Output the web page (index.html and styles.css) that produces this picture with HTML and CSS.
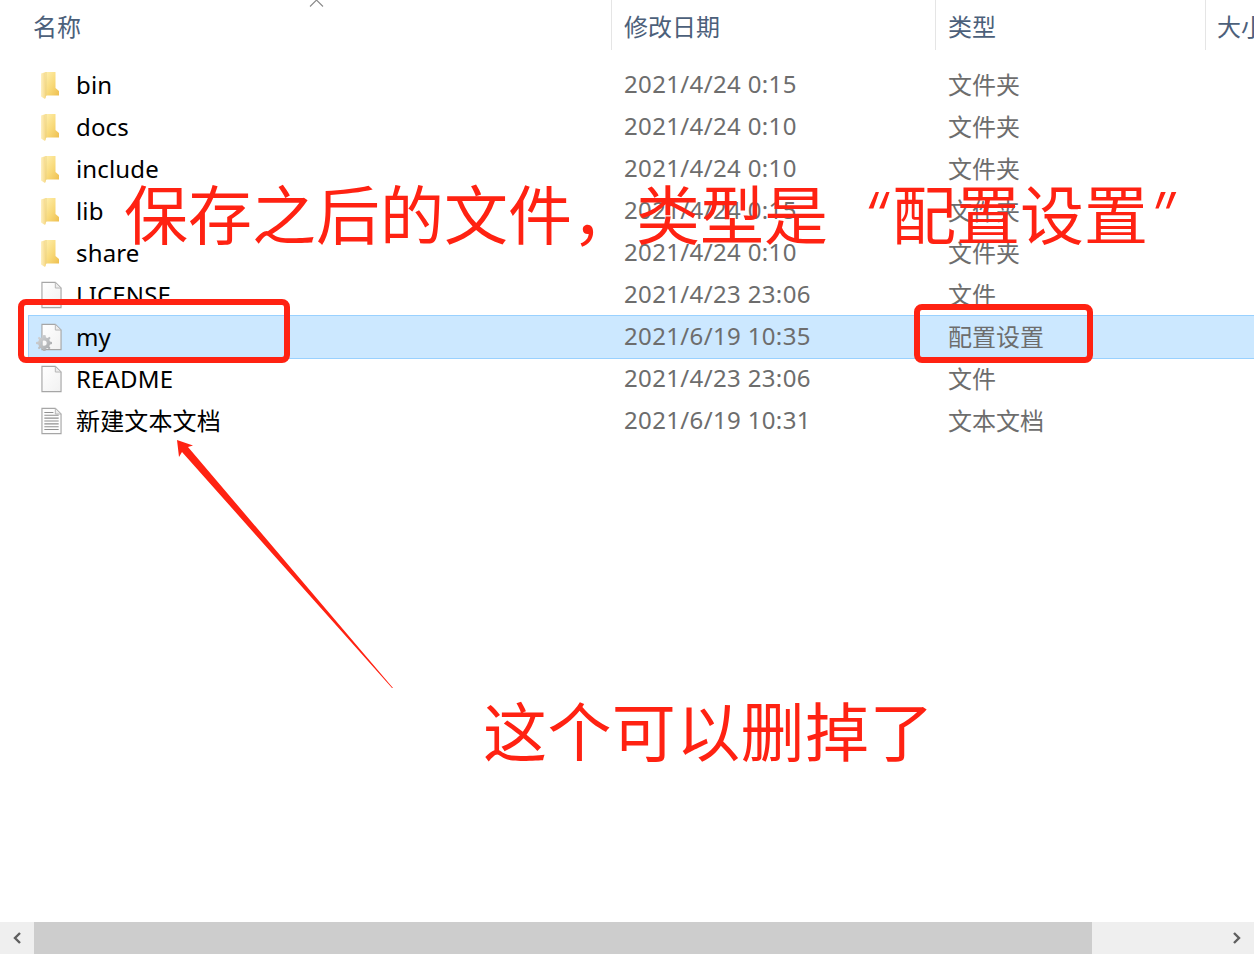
FILE: index.html
```html
<!DOCTYPE html>
<html lang="zh">
<head>
<meta charset="utf-8">
<title>文件列表</title>
<link rel="stylesheet" href="styles.css">
</head>
<body>
<svg class="defs" width="0" height="0" aria-hidden="true">
  <defs>
    <linearGradient id="fold" x1="0" y1="0" x2="1" y2="1">
      <stop offset="0" stop-color="#fff0b0"/>
      <stop offset="0.55" stop-color="#f8d978"/>
      <stop offset="1" stop-color="#eebf50"/>
    </linearGradient>
    <linearGradient id="foldback" x1="0" y1="0" x2="1" y2="0">
      <stop offset="0" stop-color="#fdf0c0"/>
      <stop offset="1" stop-color="#f6d680"/>
    </linearGradient>
    <linearGradient id="page" x1="0" y1="0" x2="1" y2="1">
      <stop offset="0" stop-color="#ffffff"/>
      <stop offset="1" stop-color="#f1f1f1"/>
    </linearGradient>
    <linearGradient id="gearfill" x1="0" y1="0" x2="1" y2="1">
      <stop offset="0" stop-color="#d6d8da"/>
      <stop offset="1" stop-color="#a4a6a8"/>
    </linearGradient>
    <symbol id="i-folder" viewBox="0 0 18 27">
      <path d="M0 1.5 L5 0 L5 25 L4 27 L0 24.5 Z" fill="url(#foldback)"/>
      <path d="M4 0 H14.5 V16 L18 19 V23.5 H4.5 Z" fill="url(#fold)"/>
      <path d="M5 0 V24" stroke="#e9cf86" stroke-width="0.8" fill="none"/>
    </symbol>
    <symbol id="i-file" viewBox="0 0 22 28">
      <path d="M1 .7 H15 L21 6.7 V27.3 H1 Z" fill="url(#page)" stroke="#a6a6a6" stroke-width="1.2"/>
      <path d="M15 .7 V6.7 H21 Z" fill="#ececec" stroke="#b5b5b5" stroke-width="1"/>
    </symbol>
    <symbol id="i-text" viewBox="0 0 22 28">
      <path d="M1 .7 H15 L21 6.7 V27.3 H1 Z" fill="#fdfdfd" stroke="#a6a6a6" stroke-width="1.2"/>
      <path d="M15 .7 V6.7 H21 Z" fill="#ececec" stroke="#b5b5b5" stroke-width="1"/>
      <path d="M3.5 5 H13 M3.5 8 H18.5 M3.5 11 H18.5 M3.5 14 H18.5 M3.5 17 H18.5 M3.5 20 H18.5 M3.5 23 H18.5" stroke="#909090" stroke-width="1.1" fill="none"/>
    </symbol>
  </defs>
</svg>

<main class="window">
  <header class="head">
    <div class="col col-name head-cell">名称
      <svg class="sort" width="15" height="8" viewBox="0 0 15 8"><path d="M1 7.5 L7.5 1 L14 7.5" fill="none" stroke="#8a8a8a" stroke-width="1.1"/></svg>
    </div>
    <div class="col col-date head-cell">修改日期</div>
    <div class="col col-type head-cell">类型</div>
    <div class="col col-size head-cell">大小</div>
  </header>

  <section class="list">
    <div class="row"><div class="col col-name"><svg class="icon-folder"><use href="#i-folder"/></svg><span class="name">bin</span></div><div class="col col-date">2021/4/24 0:15</div><div class="col col-type">文件夹</div></div>
    <div class="row"><div class="col col-name"><svg class="icon-folder"><use href="#i-folder"/></svg><span class="name">docs</span></div><div class="col col-date">2021/4/24 0:10</div><div class="col col-type">文件夹</div></div>
    <div class="row"><div class="col col-name"><svg class="icon-folder"><use href="#i-folder"/></svg><span class="name">include</span></div><div class="col col-date">2021/4/24 0:10</div><div class="col col-type">文件夹</div></div>
    <div class="row"><div class="col col-name"><svg class="icon-folder"><use href="#i-folder"/></svg><span class="name">lib</span></div><div class="col col-date">2021/4/24 0:15</div><div class="col col-type">文件夹</div></div>
    <div class="row"><div class="col col-name"><svg class="icon-folder"><use href="#i-folder"/></svg><span class="name">share</span></div><div class="col col-date">2021/4/24 0:10</div><div class="col col-type">文件夹</div></div>
    <div class="row"><div class="col col-name"><svg class="icon-file"><use href="#i-file"/></svg><span class="name">LICENSE</span></div><div class="col col-date">2021/4/23 23:06</div><div class="col col-type">文件</div></div>
    <div class="row selected"><div class="col col-name"><span class="icon-wrap"><svg class="icon-file"><use href="#i-file"/></svg><svg class="gear" viewBox="0 0 18 18"><path d="M9 1 L10.6 1.2 L11 3.4 L12.6 4.1 L14.4 2.8 L15.6 4 L14.3 5.8 L15 7.4 L17 7.9 V10 L15 10.5 L14.3 12.2 L15.5 14 L14.2 15.3 L12.5 14 L10.9 14.7 L10.5 17 H8 L7.5 14.7 L5.9 14 L4 15.3 L2.8 14 L4 12.2 L3.3 10.6 L1 10 V8 L3.3 7.4 L4 5.8 L2.8 4 L4 2.8 L5.9 4 L7.5 3.3 L8 1.2 Z M9 6.4 A2.7 2.7 0 1 0 9 11.8 A2.7 2.7 0 1 0 9 6.4 Z" fill="url(#gearfill)" fill-rule="evenodd"/></svg></span><span class="name">my</span></div><div class="col col-date">2021/6/19 10:35</div><div class="col col-type">配置设置</div></div>
    <div class="row"><div class="col col-name"><svg class="icon-file"><use href="#i-file"/></svg><span class="name">README</span></div><div class="col col-date">2021/4/23 23:06</div><div class="col col-type">文件</div></div>
    <div class="row"><div class="col col-name"><svg class="icon-file"><use href="#i-text"/></svg><span class="name">新建文本文档</span></div><div class="col col-date">2021/6/19 10:31</div><div class="col col-type">文本文档</div></div>
  </section>

  <footer class="scrollbar">
    <div class="scroll-btn"><svg width="10" height="12" viewBox="0 0 10 12"><path d="M8 1 L3 6 L8 11" fill="none" stroke="#5f5f5f" stroke-width="2.4"/></svg></div>
    <div class="scroll-thumb"></div>
    <div class="scroll-rest"><svg width="10" height="12" viewBox="0 0 10 12"><path d="M2 1 L7 6 L2 11" fill="none" stroke="#5f5f5f" stroke-width="2.4"/></svg></div>
  </footer>
</main>

<div class="note note-top">保存之后的文件，类型是<span class="quote quote-open">“</span>配置设置<span class="quote quote-close">”</span></div>
<div class="note note-bottom">这个可以删掉了</div>
<div class="mark mark-name"></div>
<div class="mark mark-type"></div>
<svg class="arrow" width="1254" height="955" viewBox="0 0 1254 955" aria-hidden="true">
  <polygon points="177,440 193,445.5 188,447 393,688 392,688 182,452 179,457" fill="#ff2212"/>
</svg>
</body>
</html>
```
FILE: styles.css
```css
* { box-sizing: border-box; }
html, body { margin: 0; padding: 0; height: 955px; overflow: hidden; background: #fff; }
body {
  position: relative;
  font-family: "Noto Sans", "Noto Sans CJK SC", sans-serif;
  font-size: 24px;
  color: #000;
}
.defs { position: absolute; }
.window { display: flex; flex-direction: column; height: 955px; }

.head { display: flex; height: 50px; flex: none; margin-bottom: 14px; color: #4c607a; }
.head-cell { display: flex; align-items: center; height: 50px; position: relative; }
.head .col-name { width: 612px; padding-left: 33px; border-right: 1px solid #e5e5e5; }
.head .col-date { width: 324px; padding-left: 12px; border-right: 1px solid #e5e5e5; }
.head .col-type { width: 270px; padding-left: 12px; border-right: 1px solid #e5e5e5; }
.head .col-size { flex: 1; padding-left: 11px; white-space: nowrap; overflow: hidden; }
.sort { position: absolute; left: 309px; top: -1px; }

.list { flex: 1; min-height: 0; }
.row { display: flex; align-items: center; height: 42px; margin-left: 28px; color: #6d6d6d; border: 1px solid transparent; border-right: 0; }
.row.selected { height: 44px; margin-top: -1px; margin-bottom: -1px; background: #cce8ff; border-color: #99d1ff; }
.row .col-name { display: flex; align-items: center; width: 595px; padding-left: 12px; color: #000; }
.row .col-date { width: 324px; letter-spacing: 0.35px; padding-bottom: 3px; }
.row .col-type { width: 290px; padding-bottom: 3px; }
.name { letter-spacing: 0.15px; line-height: 42px; margin-left: 14px; }
.icon-folder { width: 18px; height: 27px; margin-right: 3px; flex: none; }
.icon-file { width: 21px; height: 28px; flex: none; display: block; }
.icon-wrap { position: relative; display: block; width: 21px; height: 28px; flex: none; }
.gear { position: absolute; left: -6px; top: 11px; width: 18px; height: 18px; }

.scrollbar { display: flex; flex: none; height: 32px; margin-bottom: 1px; background: #efefef; }
.scroll-btn { width: 34px; display: flex; align-items: center; justify-content: center; }
.scroll-thumb { width: 1058px; background: #cdcdcd; }
.scroll-rest { flex: 1; display: flex; align-items: center; justify-content: flex-end; padding-right: 12px; }

.note { position: absolute; color: #ff2212; font-family: "Noto Sans CJK SC", sans-serif; font-size: 64px; line-height: 80px; white-space: nowrap; text-spacing-trim: space-all; }
.note-top { left: 124px; top: 171px; }
.note-bottom { left: 483px; top: 688px; letter-spacing: 0.4px; }
.quote { display: inline-block; width: 64px; font-family: Inter, sans-serif; font-style: italic; font-weight: 300; line-height: 64px; }
.quote-open { text-align: right; padding-right: 2px; }
.quote-close { text-align: left; }
.mark { position: absolute; border: 6px solid #ff2212; border-radius: 8px; }
.mark-name { left: 18px; top: 299px; width: 272px; height: 64px; }
.mark-type { left: 914px; top: 304px; width: 179px; height: 59px; }
.arrow { position: absolute; left: 0; top: 0; pointer-events: none; }
```
